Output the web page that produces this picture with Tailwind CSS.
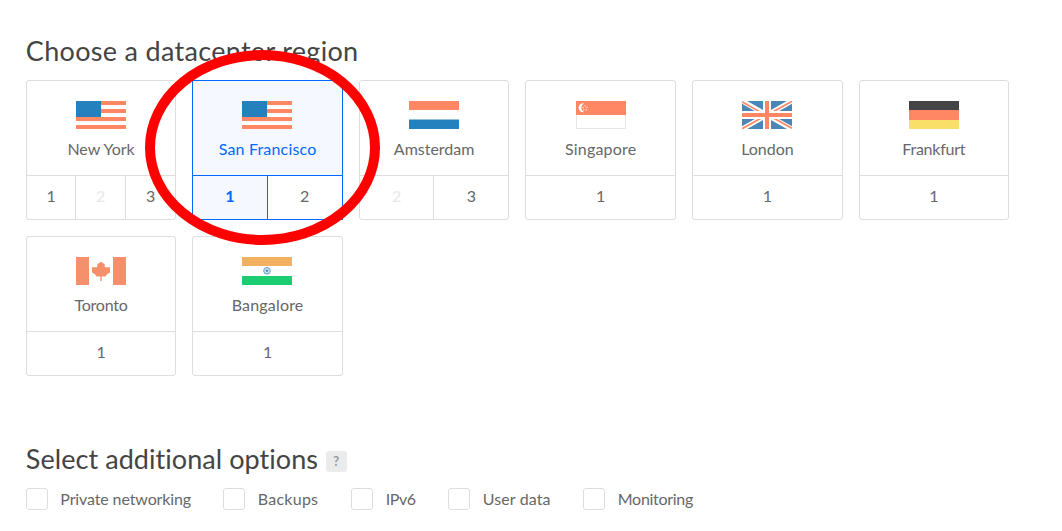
<!DOCTYPE html>
<html lang="en">
<head>
<meta charset="utf-8">
<title>Create Droplet</title>
<script src="https://cdn.jsdelivr.net/npm/@tailwindcss/browser@4"></script>
</head>
<body class="relative h-[531px] overflow-hidden bg-white pl-[25.8px] pt-9 font-[Lato,sans-serif] text-base text-[#676767] [font-variant-ligatures:none]">
<svg class="hidden">
  <symbol id="us" viewBox="0 0 50 28"><path fill="#fff" d="M0 0h50v28H0z"/><path fill="#ff8763" d="M0 0h50v4H0zM0 8h50v4H0zM0 16h50v4H0zM0 24h50v4H0z"/><path fill="#2581bd" d="M0 0h25v16H0z"/></symbol>
</svg>
<h2 class="h-[44px] whitespace-nowrap text-[27px] leading-[30px] tracking-[0.31px] text-[#444]">Choose a datacenter region</h2>
<div class="grid w-[983.25px] grid-cols-6 gap-x-[16.05px] gap-y-4">
  <div class="flex h-[140px] flex-col overflow-hidden rounded-[3px] border border-[#ddd]">
    <div class="flex h-[94px] flex-col items-center pt-5"><svg class="h-7 w-[50px]"><use href="#us"/></svg><span class="mt-2 leading-6">New York</span></div>
    <div class="grid flex-1 grid-cols-3 divide-x divide-[#ddd] border-t border-[#ddd] text-center leading-[40px]"><span>1</span><span class="text-[#e8e8e8]">2</span><span>3</span></div>
  </div>
  <div class="flex h-[140px] flex-col overflow-hidden border border-[#0069ff]">
    <div class="flex h-[94px] flex-col items-center bg-[#f5f8ff] pt-5 text-[#0069ff]"><svg class="mr-px h-7 w-[50px]"><use href="#us"/></svg><span class="mt-2 leading-6 tracking-[0.18px]">San Francisco</span></div>
    <div class="grid flex-1 grid-cols-2 divide-x divide-[#0069ff] border-t border-[#0069ff] text-center leading-[40px]"><span class="bg-[#f5f8ff] font-bold text-[#0069ff]">1</span><span>2</span></div>
  </div>
  <div class="flex h-[140px] flex-col overflow-hidden rounded-[3px] border border-[#ddd]">
    <div class="flex h-[94px] flex-col items-center pt-5"><svg class="h-7 w-[50px]" viewBox="0 0 50 28"><path fill="#ff8763" d="M0 0h50v9H0z"/><path fill="#2581bd" d="M0 18.500h50V28H0z"/></svg><span class="mt-2 leading-6">Amsterdam</span></div>
    <div class="grid flex-1 grid-cols-2 divide-x divide-[#ddd] border-t border-[#ddd] text-center leading-[40px]"><span class="text-[#e8e8e8]">2</span><span>3</span></div>
  </div>
  <div class="flex h-[140px] flex-col overflow-hidden rounded-[3px] border border-[#ddd]">
    <div class="flex h-[94px] flex-col items-center pt-5"><svg class="h-7 w-[50px]" viewBox="0 0 50 28"><path fill="#fff" stroke="#e6e6e6" d="M.5.5h49v27H.5z"/><path fill="#ff8763" d="M0 0h50v14H0z"/><path fill="#fff" d="M8 2.400A4.500 4.500 0 1 0 8 11.200A4.900 4.900 0 0 1 8 2.400z"/><g fill="#fff" fill-opacity=".8"><circle cx="9" cy="4.900" r=".75"/><circle cx="11" cy="6.400" r=".75"/><circle cx="10.300" cy="8.700" r=".75"/><circle cx="7.700" cy="8.700" r=".75"/><circle cx="7" cy="6.400" r=".75"/></g></svg><span class="mt-2 leading-6 tracking-[0.18px]">Singapore</span></div>
    <div class="flex-1 border-t border-[#ddd] text-center leading-[40px]">1</div>
  </div>
  <div class="mr-[-0.4px] flex h-[140px] flex-col overflow-hidden rounded-[3px] border border-[#ddd]">
    <div class="flex h-[94px] flex-col items-center pt-5"><svg class="h-7 w-[50px]" viewBox="0 0 50 28"><path fill="#4b87b6" d="M0 0h50v28H0z"/><path stroke="#fff" stroke-width="5" d="M0 0l50 28M50 0L0 28"/><path stroke="#ff8763" stroke-width="1.700" d="M0 .8l22 12.300M50 .2L28 12.500M0 27.800l22-12.300M50 27.200L28 14.900"/><path fill="#fff" d="M21 0h8v28h-8zM0 10h50v8H0z"/><path fill="#ff8763" d="M23 0h4v28h-4zM0 12h50v4H0z"/></svg><span class="mt-2 leading-6">London</span></div>
    <div class="flex-1 border-t border-[#ddd] text-center leading-[40px]">1</div>
  </div>
  <div class="flex h-[140px] flex-col overflow-hidden rounded-[3px] border border-[#ddd]">
    <div class="flex h-[94px] flex-col items-center pt-5"><svg class="h-7 w-[50px]" viewBox="0 0 50 28"><path fill="#444446" d="M0 0h50v9H0z"/><path fill="#ff8763" d="M0 9h50v10H0z"/><path fill="#f9df68" d="M0 19h50v9H0z"/></svg><span class="mt-2 leading-6 tracking-[-0.25px]">Frankfurt</span></div>
    <div class="flex-1 border-t border-[#ddd] text-center leading-[40px]">1</div>
  </div>
  <div class="flex h-[140px] flex-col overflow-hidden rounded-[3px] border border-[#ddd]">
    <div class="flex h-[94px] flex-col items-center pt-5"><svg class="h-7 w-[50px]" viewBox="0 0 50 28"><path fill="#f5906c" d="M0 0h13v28H0zM37 0h13v28H37zM25 4.800L28.600 7.200L29 10.200L34 10.200L34 15.600L31.400 17L29.400 19.600L25.700 19.400V24H24.300V19.400L20.600 19.600L18.600 17L16 15.600L16 10.200L21 10.200L21.400 7.200z"/></svg><span class="mt-2 leading-6 tracking-[-0.25px]">Toronto</span></div>
    <div class="flex-1 border-t border-[#ddd] text-center leading-[40px]">1</div>
  </div>
  <div class="flex h-[140px] flex-col overflow-hidden rounded-[3px] border border-[#ddd]">
    <div class="flex h-[94px] flex-col items-center pt-5"><svg class="mr-px h-7 w-[50px]" viewBox="0 0 50 28"><path fill="#f3b061" d="M0 0h50v9H0z"/><path fill="#19cd70" d="M0 19h50v9H0z"/><g fill="none" stroke="#4385bd"><circle cx="25" cy="13.800" r="3.300" stroke-width=".8"/><path stroke-width=".5" d="M25 10.500v6.600M21.700 13.800h6.600M22.700 11.500l4.600 4.600M27.300 11.500l-4.600 4.600"/></g><circle cx="25" cy="13.800" r="1" fill="#4385bd"/></svg><span class="mt-2 leading-6 tracking-[0.18px]">Bangalore</span></div>
    <div class="flex-1 border-t border-[#ddd] text-center leading-[40px]">1</div>
  </div>
</div>
<div class="mt-[68px] flex h-[44px] items-start text-[#444]">
  <h2 class="w-[300px] whitespace-nowrap text-[27px] leading-[30px] tracking-[0.06px]">Select additional options</h2>
  <span class="mt-[7px] h-[21px] w-[21px] rounded-[3px] bg-[#ebebeb] text-center text-[13px] leading-[21px] font-bold text-[#999]">?</span>
</div>
<div class="flex whitespace-nowrap leading-[22px]">
  <label class="flex w-[197px] gap-[12.5px]"><i class="h-[22px] w-[22px] rounded-[3px] border border-[#ddd]"></i><span class="tracking-[-0.12px]">Private networking</span></label>
  <label class="flex w-[128px] gap-[13px]"><i class="h-[22px] w-[22px] rounded-[3px] border border-[#ddd]"></i><span class="tracking-[0.25px]">Backups</span></label>
  <label class="flex w-[97px] gap-[13px]"><i class="h-[22px] w-[22px] rounded-[3px] border border-[#ddd]"></i><span class="tracking-[-0.45px]">IPv6</span></label>
  <label class="flex w-[135px] gap-[13px]"><i class="h-[22px] w-[22px] rounded-[3px] border border-[#ddd]"></i><span class="tracking-[0.1px]">User data</span></label>
  <label class="flex gap-[13px]"><i class="h-[22px] w-[22px] rounded-[3px] border border-[#ddd]"></i><span class="tracking-[-0.3px]">Monitoring</span></label>
</div>
<svg class="pointer-events-none absolute left-[145px] top-[50px] h-[195px] w-[235px]" viewBox="0 0 235 195"><ellipse cx="117.500" cy="97.500" rx="112.500" ry="92.500" fill="none" stroke="#f00" stroke-width="10"/></svg>
</body>
</html>
